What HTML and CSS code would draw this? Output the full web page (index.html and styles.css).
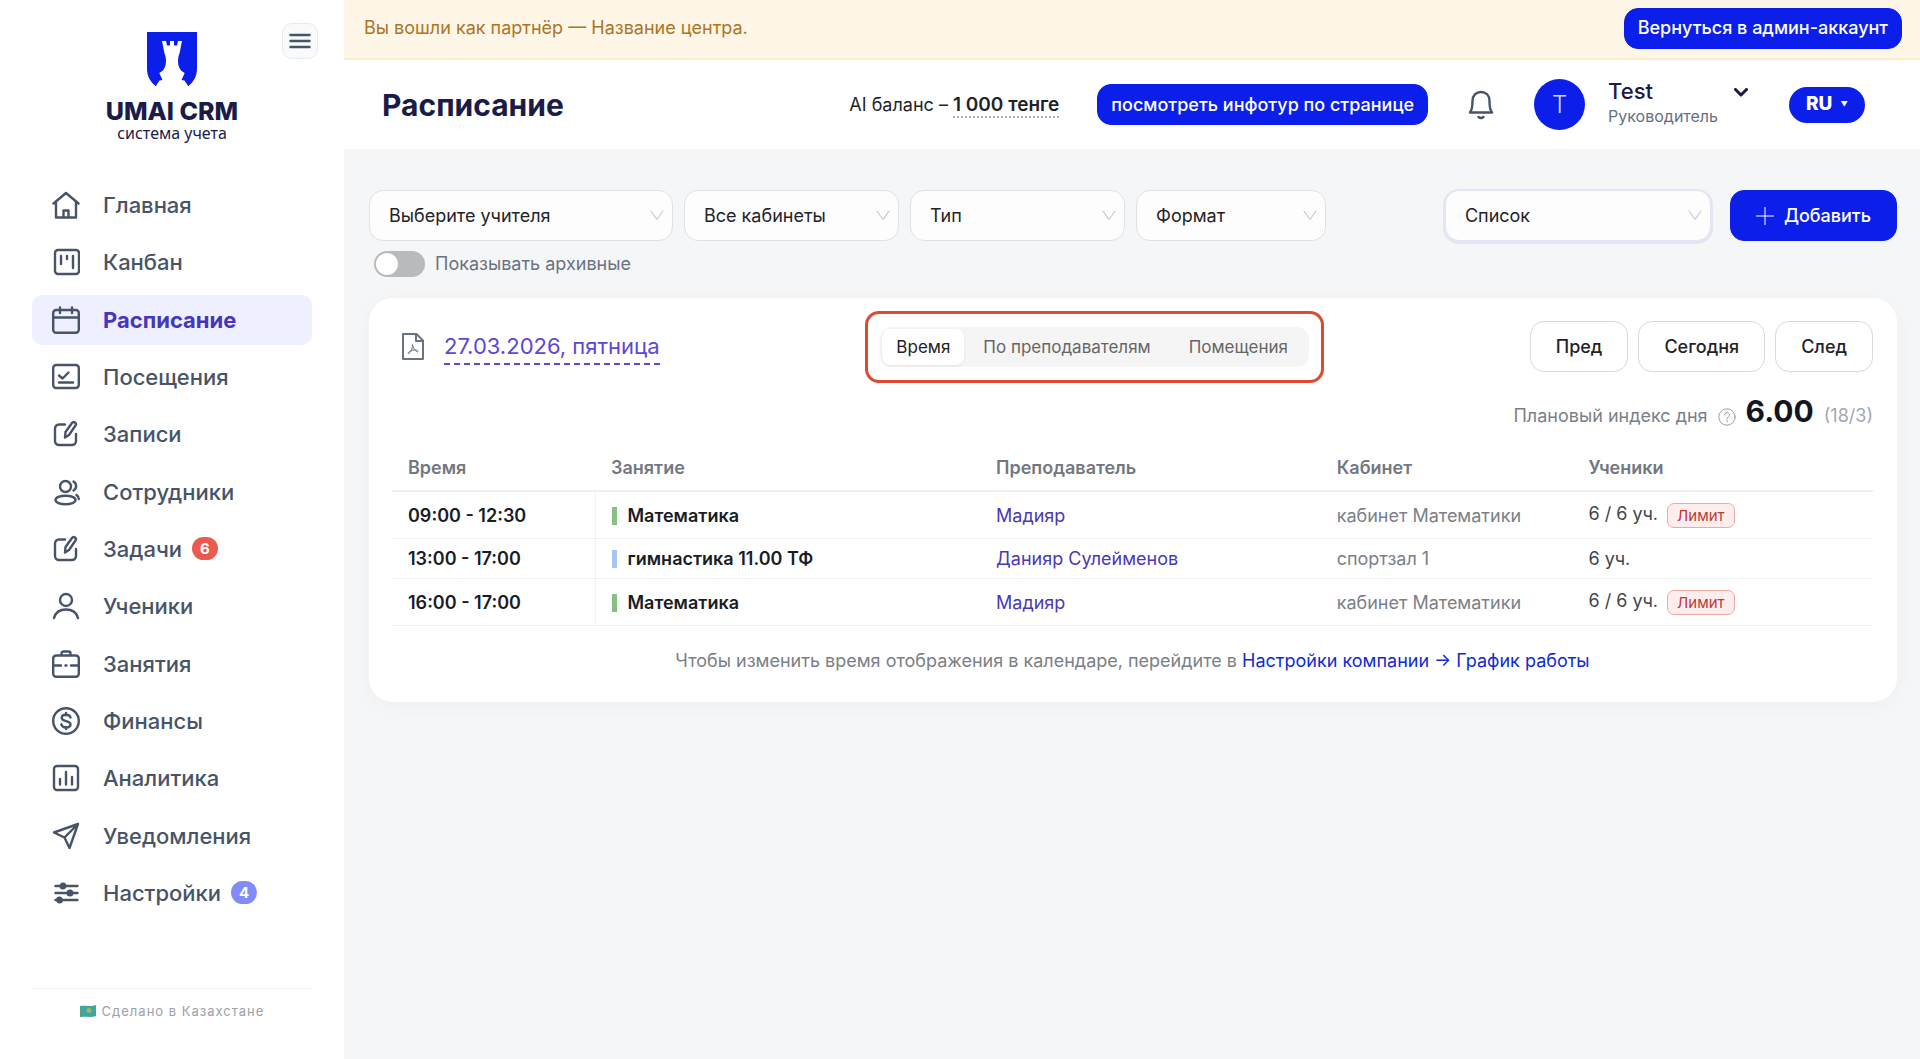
FILE: index.html
```html
<!DOCTYPE html>
<html lang="ru">
<head>
    <meta charset="UTF-8">
    <meta name="viewport" content="width=device-width, initial-scale=1">
    <title>Расписание</title>
    <link rel="stylesheet" href="styles.css">
</head>
<body>
    <!-- sidebar -->
    <aside class="sidebar">
        <button class="menu-toggle" type="button" aria-label="Меню">
            <svg width="22" height="16" viewBox="0 0 22 16"><path d="M1.500 2h19M1.500 8h19M1.500 14h19"/></svg>
        </button>

        <div class="logo">
            <svg width="50" height="55" viewBox="0 0 50 55">
                <path fill="#0c1fea" d="M0 0h50v37c0 7-3.500 13-8.700 17.300L37.500 48.500l-3-.5 3.200-7C33 39 31 34 31 29c0-3 .5-5 1.500-7.500L35 9h-4l-1 4.500h-3V9h-4v4.500h-3L19 9h-4l2.500 12.500C18.500 24 19 26 19 29c0 5-2 10-6.700 12l3.200 7-3 .5-3.800 5.800C3.500 50 0 44 0 37z"/>
            </svg>
            <span class="logo-name">UMAI CRM</span>
            <span class="logo-sub">система учета</span>
        </div>

        <nav class="nav">
            <a href="#" class="nav-item">
                <svg viewBox="0 0 28 28"><path d="M1.500 12.500L14 2l12.500 10.500M4 11v15.500h20V11M11.500 26v-6.500h5V26"/></svg>
                <span>Главная</span>
            </a>
            <a href="#" class="nav-item">
                <svg viewBox="0 0 28 28"><rect x="3" y="2" width="24" height="24" rx="3"/><path d="M9 8v8M15 8v3M21 8v12"/></svg>
                <span>Канбан</span>
            </a>
            <a href="#" class="nav-item active">
                <svg viewBox="0 0 28 28"><rect x="1.200" y="4" width="25.600" height="22.800" rx="3"/><path d="M1 11.500h26M8 1.500v5.500M20 1.500v5.500"/></svg>
                <span>Расписание</span>
            </a>
            <a href="#" class="nav-item">
                <svg viewBox="0 0 28 28"><rect x="1.200" y="2" width="25.600" height="23" rx="3"/><path d="M7 12.500l3.500 3 6-6M7 19.500h14"/></svg>
                <span>Посещения</span>
            </a>
            <a href="#" class="nav-item">
                <svg viewBox="0 0 28 28"><path d="M13 4.500H7a4 4 0 0 0-4 4V21a4 4 0 0 0 4 4h13a4 4 0 0 0 4-4v-7"/><path d="M13.500 12l6.500-9a2 2 0 0 1 3.500 2.500L17 15l-4 2.500z"/></svg>
                <span>Записи</span>
            </a>
            <a href="#" class="nav-item">
                <svg viewBox="0 0 28 28"><circle cx="13.500" cy="8.500" r="5.500"/><ellipse cx="13.500" cy="22" rx="10" ry="4.300"/><path d="M21.500 3.500c3.500 2 3.500 7 0 9M24.500 17c1.500 1 2.300 2.500 2.300 4"/></svg>
                <span>Сотрудники</span>
            </a>
            <a href="#" class="nav-item">
                <svg viewBox="0 0 28 28"><path d="M13 4.500H7a4 4 0 0 0-4 4V21a4 4 0 0 0 4 4h13a4 4 0 0 0 4-4v-7"/><path d="M13.500 12l6.500-9a2 2 0 0 1 3.500 2.500L17 15l-4 2.500z"/></svg>
                <span>Задачи</span>
                <span class="badge badge-red">6</span>
            </a>
            <a href="#" class="nav-item">
                <svg viewBox="0 0 28 28"><circle cx="14" cy="8" r="6"/><path d="M2 26c1.500-5.500 6-8.500 12-8.500s10.500 3 12 8.500"/></svg>
                <span>Ученики</span>
            </a>
            <a href="#" class="nav-item">
                <svg viewBox="0 0 28 28"><rect x="1.200" y="5.500" width="25.600" height="21.300" rx="3"/><path d="M9.500 5V3.500a2 2 0 0 1 2-2h5a2 2 0 0 1 2 2V5M2 15.500h7M19 15.500h7M13.500 15.500h1"/></svg>
                <span>Занятия</span>
            </a>
            <a href="#" class="nav-item">
                <svg viewBox="0 0 28 28"><circle cx="14" cy="14" r="12.800"/><path d="M18.500 10.500c-.5-2-2.300-2.800-4.500-2.800-2.500 0-4.300 1.200-4.300 3.100 0 4.300 8.800 2.200 8.800 6.500 0 2-2 3.200-4.500 3.200-2.300 0-4.200-1-4.700-3.200M14 6v2M14 20v2"/></svg>
                <span>Финансы</span>
            </a>
            <a href="#" class="nav-item">
                <svg viewBox="0 0 28 28"><rect x="2" y="2" width="24" height="24" rx="3"/><path d="M8 15v5.500M14 8v12.500M20 13v7.500"/></svg>
                <span>Аналитика</span>
            </a>
            <a href="#" class="nav-item">
                <svg viewBox="0 0 28 28"><path d="M26 2L2 10.500l10.500 5L17.500 26zM12.500 15.500L26 2"/></svg>
                <span>Уведомления</span>
            </a>
            <a href="#" class="nav-item">
                <svg viewBox="0 0 28 28"><path d="M3.500 7h22M3.500 14h22M3.500 21h22"/><g fill="#475467"><circle cx="11" cy="7" r="2.300"/><circle cx="18" cy="14" r="2.300"/><circle cx="7.500" cy="21" r="2.300"/></g></svg>
                <span>Настройки</span>
                <span class="badge badge-blue">4</span>
            </a>
        </nav>

        <div class="made-in">
            <svg width="16" height="12" viewBox="0 0 16 12"><path fill="#3fa6a8" d="M0 1c5-1 10 1 16-1v11c-6 2-11 0-16 1z"/><circle cx="9" cy="5.500" r="2.500" fill="#a3b85c"/><path fill="#5f9c78" d="M0 1h2v11H0z"/></svg>
            <span>Сделано в Казахстане</span>
        </div>
    </aside>

    <div class="page">
        <!-- partner notice -->
        <div class="notice">
            <span>Вы вошли как партнёр — Название центра.</span>
            <button class="btn btn-primary" type="button">Вернуться в админ-аккаунт</button>
        </div>

        <!-- top bar -->
        <header class="topbar">
            <h1>Расписание</h1>
            <div class="balance">AI баланс – <b>1 000 тенге</b></div>
            <button class="btn btn-primary" type="button">посмотреть инфотур по странице</button>
            <button class="bell" type="button" aria-label="Уведомления">
                <svg width="26" height="30" viewBox="0 0 26 30"><path d="M2 22.500c2-2.500 2.500-5 2.500-11.500 0-5.500 3.500-9 8.500-9s8.500 3.500 8.500 9c0 6.500.5 9 2.500 11.500zM10.500 27c1.500 1.300 3.500 1.300 5 0"/></svg>
            </button>
            <div class="profile">
                <span class="avatar">T</span>
                <div class="profile-text">
                    <span class="profile-name">Test</span>
                    <span class="profile-role">Руководитель</span>
                </div>
                <button class="profile-more" type="button" aria-label="Профиль">
                    <svg width="14" height="9" viewBox="0 0 14 9"><path d="M1.500 1.500L7 7l5.500-5.500"/></svg>
                </button>
            </div>
            <button class="lang" type="button">RU <span class="lang-arrow">▼</span></button>
        </header>

        <main class="content">
            <!-- filters -->
            <div class="filters">
                <div class="select select-teacher">
                    <select aria-label="Учитель"><option>Выберите учителя</option></select>
                    <svg width="14" height="11" viewBox="0 0 14 11"><path d="M1 1l6 8.500L13 1"/></svg>
                </div>
                <div class="select select-room">
                    <select aria-label="Кабинет"><option>Все кабинеты</option></select>
                    <svg width="14" height="11" viewBox="0 0 14 11"><path d="M1 1l6 8.500L13 1"/></svg>
                </div>
                <div class="select select-room">
                    <select aria-label="Тип"><option>Тип</option></select>
                    <svg width="14" height="11" viewBox="0 0 14 11"><path d="M1 1l6 8.500L13 1"/></svg>
                </div>
                <div class="select select-format">
                    <select aria-label="Формат"><option>Формат</option></select>
                    <svg width="14" height="11" viewBox="0 0 14 11"><path d="M1 1l6 8.500L13 1"/></svg>
                </div>
                <div class="filters-right">
                    <div class="select select-view focused">
                        <select aria-label="Вид"><option>Список</option></select>
                        <svg width="14" height="11" viewBox="0 0 14 11"><path d="M1 1l6 8.500L13 1"/></svg>
                    </div>
                    <button class="btn btn-primary btn-add" type="button">
                        <svg width="18" height="18" viewBox="0 0 18 18"><path d="M9 0v18M0 9h18"/></svg>
                        Добавить
                    </button>
                </div>
            </div>
            <label class="archive">
                <input type="checkbox" class="switch">
                Показывать архивные
            </label>

            <!-- schedule -->
            <section class="card">
                <div class="card-head">
                    <div class="date">
                        <svg width="22" height="27" viewBox="0 0 22 27"><path d="M1 1h13.500L21 7.500V26H1zM14 1v7h7"/><path class="thin" d="M10.500 12c0 4-2 8-4 8.500-1.500 0 1-3 4.500-3.500 3-.5 5 .5 5 1.500s-4.500-1-5.500-6.500z"/></svg>
                        <a href="#">27.03.2026, пятница</a>
                    </div>
                    <div class="tabs">
                        <label class="tab"><input type="radio" name="mode" checked><span>Время</span></label>
                        <label class="tab"><input type="radio" name="mode"><span>По преподавателям</span></label>
                        <label class="tab"><input type="radio" name="mode"><span>Помещения</span></label>
                    </div>
                    <div class="pager">
                        <button class="btn" type="button">Пред</button>
                        <button class="btn" type="button">Сегодня</button>
                        <button class="btn" type="button">След</button>
                    </div>
                </div>

                <div class="index">
                    <span>Плановый индекс дня</span>
                    <svg width="18" height="18" viewBox="0 0 18 18"><circle cx="9" cy="9" r="8.200"/><path d="M6.500 7c0-3.300 5-3.300 5 0 0 2-2.500 2-2.500 4M9 12.500V14"/></svg>
                    <b>6.00</b>
                    <span class="index-note">(18/3)</span>
                </div>

                <table class="schedule">
                    <thead>
                        <tr>
                            <th class="col-time">Время</th>
                            <th class="col-lesson">Занятие</th>
                            <th class="col-teacher">Преподаватель</th>
                            <th class="col-room">Кабинет</th>
                            <th>Ученики</th>
                        </tr>
                    </thead>
                    <tbody>
                        <tr>
                            <td class="time">09:00 - 12:30</td>
                            <td class="lesson green">Математика</td>
                            <td><a href="#">Мадияр</a></td>
                            <td class="room">кабинет Математики</td>
                            <td>6 / 6 уч. <span class="limit">Лимит</span></td>
                        </tr>
                        <tr>
                            <td class="time">13:00 - 17:00</td>
                            <td class="lesson blue">гимнастика 11.00 ТФ</td>
                            <td><a href="#">Данияр Сулейменов</a></td>
                            <td class="room">спортзал 1</td>
                            <td>6 уч.</td>
                        </tr>
                        <tr>
                            <td class="time">16:00 - 17:00</td>
                            <td class="lesson green">Математика</td>
                            <td><a href="#">Мадияр</a></td>
                            <td class="room">кабинет Математики</td>
                            <td>6 / 6 уч. <span class="limit">Лимит</span></td>
                        </tr>
                    </tbody>
                </table>

                <p class="hint">Чтобы изменить время отображения в календаре, перейдите в <a href="#">Настройки компании → График работы</a></p>
            </section>
        </main>
    </div>
</body>
</html>
```

FILE: styles.css
```css
* {
    box-sizing: border-box;
}

body {
    margin: 0;
    display: flex;
    min-height: 100vh;
    background-color: #f4f6f8;
    color: #1f2328;
    font-family: Inter, "Open Sans", sans-serif;
    font-size: 18px;
    line-height: 24px;
}

button, select {
    font: inherit;
    color: inherit;
    cursor: pointer;
}

a {
    text-decoration: none;
}

svg {
    fill: none;
    stroke-linecap: round;
    stroke-linejoin: round;
    flex-shrink: 0;
}

/* sidebar */
.sidebar {
    position: relative;
    width: 344px;
    flex-shrink: 0;
    padding: 32px 32px 38px;
    background-color: #fff;
    display: flex;
    flex-direction: column;
}

.menu-toggle {
    position: absolute;
    top: 23px;
    right: 26px;
    width: 36px;
    height: 36px;
    padding: 0;
    display: flex;
    align-items: center;
    justify-content: center;
    background-color: #f9fafb;
    border: 1px solid #e8eaed;
    border-radius: 10px;
}

.menu-toggle svg {
    stroke: #475467;
    stroke-width: 2.4;
}

.logo {
    display: flex;
    flex-direction: column;
    align-items: center;
    color: #1b1b47;
}

.logo-name {
    margin-top: 12px;
    font-size: 25px;
    font-weight: 800;
    line-height: 24px;
}

.logo-sub {
    font-family: "Noto Sans", sans-serif;
    font-size: 16px;
    line-height: 20px;
}

.nav {
    flex: 1;
    margin-top: 37px;
    margin-bottom: 70px;
    display: flex;
    flex-direction: column;
    justify-content: space-between;
}

.nav-item {
    display: flex;
    align-items: center;
    height: 50px;
    padding: 0 20px;
    border-radius: 10px;
    color: #475467;
    font-size: 22px;
    font-weight: 500;
}

.nav-item svg {
    width: 28px;
    height: 28px;
    margin-right: 23px;
    stroke: #475467;
    stroke-width: 2.4;
}

.nav-item.active {
    background-color: #eef0ff;
    color: #4635bd;
    font-weight: 700;
}

.badge {
    margin-left: 10px;
    padding: 0 8px;
    border-radius: 12px;
    color: #fff;
    font-size: 15px;
    font-weight: 700;
    line-height: 23px;
}

.badge-red {
    background-color: #ec594f;
}

.badge-blue {
    background-color: #818cf8;
}

.made-in {
    display: flex;
    align-items: center;
    justify-content: center;
    gap: 6px;
    padding-top: 12px;
    border-top: 1px solid #f0f1f3;
    color: #9aa1ab;
    font-size: 13px;
    line-height: 20px;
    letter-spacing: 1px;
}

/* right side */
.page {
    flex: 1;
    min-width: 0;
}

.notice {
    display: flex;
    align-items: center;
    justify-content: space-between;
    height: 60px;
    padding: 0 18px 2px 20px;
    background-color: #fef6e6;
    border-bottom: 2px solid #fdebcb;
    color: #ad7426;
}

.btn {
    height: 51px;
    padding: 0 25px;
    background-color: #fff;
    border: 1px solid #d9d9d9;
    border-radius: 14px;
    font-weight: 500;
    white-space: nowrap;
}

.btn-primary {
    height: 41px;
    padding: 0 13px;
    background-color: #0c1fea;
    border-color: #0c1fea;
    color: #fff;
}

.topbar {
    display: flex;
    align-items: center;
    height: 89px;
    padding: 0 55px 0 38px;
    background-color: #fff;
}

.topbar h1 {
    margin: 0 auto 0 0;
    color: #1b1b47;
    font-size: 30px;
    font-weight: 700;
}

.balance {
    margin-right: 38px;
}

.balance b {
    border-bottom: 2px dotted #a9adb5;
    font-size: 19px;
    font-weight: 600;
}

.bell {
    margin: 0 40px;
    padding: 0;
    border: none;
    background: none;
    line-height: 0;
}

.bell svg {
    stroke: #475467;
    stroke-width: 2.4;
}

.profile {
    display: flex;
    margin-right: 41px;
}

.avatar {
    width: 51px;
    height: 51px;
    margin-right: 23px;
    border-radius: 50%;
    background-color: #0c1fea;
    color: #d5d9fb;
    font-size: 24px;
    font-weight: 300;
    line-height: 51px;
    text-align: center;
}

.profile-text {
    display: flex;
    flex-direction: column;
}

.profile-name {
    color: #1b1b47;
    font-size: 22px;
    font-weight: 500;
    line-height: 24px;
}

.profile-role {
    color: #667085;
    font-size: 16px;
    line-height: 26px;
}

.profile-more {
    height: 24px;
    margin-left: 16px;
    padding: 0;
    border: none;
    background: none;
}

.profile-more svg {
    stroke: #1b1b47;
    stroke-width: 3;
}

.lang {
    height: 36px;
    padding: 0 17px;
    border: none;
    border-radius: 18px;
    background-color: #0c1fea;
    color: #fff;
    font-size: 19px;
    font-weight: 800;
}

.lang-arrow {
    margin-left: 4px;
    font-size: 7px;
    vertical-align: middle;
}

.content {
    padding: 41px 23px 40px 25px;
}

/* filters */
.filters {
    display: flex;
    gap: 11px;
}

.filters-right {
    display: flex;
    gap: 19px;
    margin-left: auto;
}

.select {
    position: relative;
}

.select-teacher {
    width: 304px;
}

.select-room {
    width: 215px;
}

.select-format {
    width: 190px;
}

.select-view {
    width: 266px;
}

.select select {
    appearance: none;
    width: 100%;
    height: 51px;
    padding: 0 36px 0 19px;
    background-color: #fdfdfe;
    border: 1px solid #dfe1e6;
    border-radius: 14px;
}

.select.focused select {
    border-color: #e4e5f4;
    box-shadow: 0 1px 0 2px #e4e5f4;
}

.select svg {
    position: absolute;
    top: 20px;
    right: 9px;
    stroke: #b9bcc2;
    pointer-events: none;
}

.btn-add {
    height: 51px;
    padding: 0 25px;
    display: flex;
    align-items: center;
    gap: 10px;
}

.btn-add svg {
    stroke: #fff;
    stroke-linecap: butt;
}

.archive {
    display: inline-flex;
    align-items: center;
    gap: 10px;
    margin: 10px 0 21px 5px;
    color: #6b7280;
}

.switch {
    appearance: none;
    width: 51px;
    height: 26px;
    margin: 0;
    padding: 2px;
    border-radius: 13px;
    background-color: #b8babc;
}

.switch::before {
    content: "";
    display: block;
    width: 22px;
    height: 22px;
    border-radius: 50%;
    background-color: #fff;
}

.switch:checked::before {
    margin-left: auto;
}

/* card */
.card {
    padding: 23px 24px 29px 23px;
    border-radius: 24px;
    background-color: #fff;
    box-shadow: 0 4px 20px rgba(16, 24, 40, 0.03);
}

.card-head {
    display: flex;
    align-items: center;
    justify-content: space-between;
}

.date {
    display: flex;
    align-items: center;
    gap: 20px;
    padding-left: 10px;
}

.date svg {
    stroke: #6b7280;
    stroke-width: 2;
}

.date .thin {
    stroke-width: 1;
}

.date a {
    border-bottom: 2px dashed #5b48d6;
    color: #5b48d6;
    font-size: 22px;
    line-height: 34px;
}

.tabs {
    position: relative;
    display: flex;
    padding: 2px;
    border-radius: 12px;
    background-color: #f5f5f5;
    font-size: 17px;
}

/* red frame round the switcher */
.tabs::after {
    content: "";
    position: absolute;
    inset: -16px -15px;
    border: 3px solid #dc4a32;
    border-radius: 14px;
    pointer-events: none;
}

.tab input {
    position: absolute;
    opacity: 0;
}

.tab span {
    display: block;
    padding: 0 14px;
    border-radius: 8px;
    color: #666;
    line-height: 36px;
}

.tab + .tab span {
    padding: 0 19px;
}

.tab input:checked + span {
    background-color: #fff;
    color: #1f2328;
    box-shadow: 0 1px 3px rgba(0, 0, 0, 0.08);
}

.pager {
    display: flex;
    gap: 10px;
}

.index {
    display: flex;
    align-items: baseline;
    justify-content: flex-end;
    gap: 10px;
    margin-top: 23px;
    color: #7b8088;
    line-height: 32px;
}

.index svg {
    align-self: center;
    margin-top: 6px;
    stroke: #9a9ea6;
}

.index b {
    color: #14161f;
    font-size: 30px;
    font-weight: 700;
}

.index-note {
    color: #a3a7ae;
}

/* table */
.schedule {
    width: 100%;
    margin-top: 14px;
    border-collapse: collapse;
    table-layout: fixed;
    text-align: left;
}

.schedule th {
    padding: 10px 16px;
    border-bottom: 2px solid #eceef0;
    color: #73777f;
    font-weight: 600;
}

.col-time {
    width: 203px;
}

.col-lesson {
    width: 26%;
}

.col-teacher {
    width: 23%;
}

.col-room {
    width: 17%;
}

.schedule td {
    padding: 8px 16px 7px;
    border-bottom: 1px solid #eff1f3;
    color: #41454d;
}

.schedule td a {
    color: #4a38b8;
}

.schedule .time {
    border-right: 1px solid #eff1f3;
    color: #1a1c25;
    font-weight: 600;
}

.schedule .lesson {
    color: #1a1c25;
    font-weight: 600;
}

.lesson::before {
    content: "";
    display: inline-block;
    width: 5px;
    height: 18px;
    margin-right: 11px;
    vertical-align: -3px;
}

.lesson.green::before {
    background-color: #85c183;
}

.lesson.blue::before {
    background-color: #a8c5f7;
}

.schedule .room {
    color: #7b8088;
}

.limit {
    display: inline-block;
    margin: 3px 0 3px 4px;
    padding: 0 9px;
    border: 1px solid #f0a8a4;
    border-radius: 7px;
    background-color: #fdeeed;
    color: #bb3a35;
    font-size: 15px;
    line-height: 23px;
    vertical-align: middle;
}

.hint {
    margin: 23px 0 0;
    color: #7b8088;
    text-align: center;
}

.hint a {
    color: #0f2bd6;
}
```
